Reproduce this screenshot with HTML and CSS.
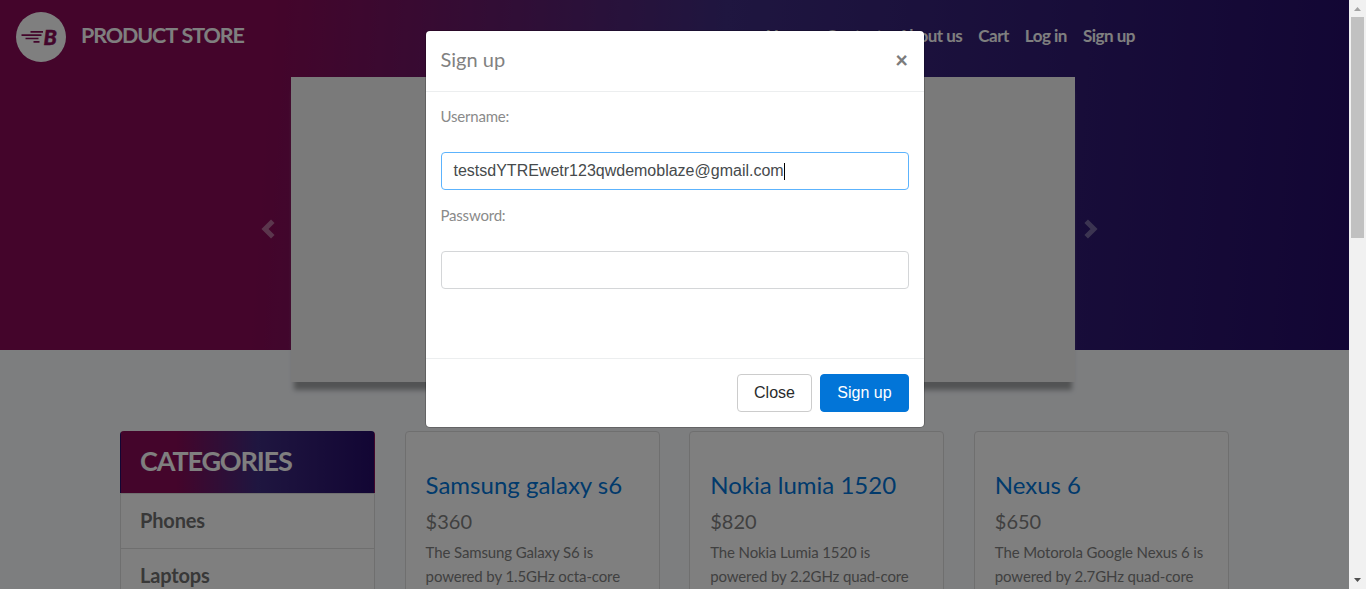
FILE: index.html
```
<!DOCTYPE html>
<html lang="en">
<head>
<meta charset="utf-8">
<title>STORE</title>
<link rel="stylesheet" href="styles.css">
</head>
<body>
<div class="window">
  <div class="page">
    <header class="hero">
      <nav class="navbar">
        <a class="brand">
          <svg class="logo" viewBox="0 0 50 50" width="50" height="50">
            <circle cx="25" cy="25" r="25" fill="#fff"/>
            <path d="M14.500 19.800h12.500M5.500 23.200h20M9.500 26.500h13M17.500 29.800h6" stroke="#870a56" stroke-width="1.700" fill="none"/>
            <text class="logo-letter" x="27.500" y="32.500">B</text>
          </svg>
          <span class="brand-name">PRODUCT STORE</span>
        </a>
        <ul class="nav-links">
          <li>Home</li><li>Contact</li><li>About us</li><li>Cart</li><li>Log in</li><li>Sign up</li>
        </ul>
      </nav>
      <div class="carousel">
        <svg class="arrow" viewBox="0 0 14 20" width="14" height="20"><path d="M11.800 2.200L4 10l7.800 7.800" /></svg>
        <div class="slide"></div>
        <svg class="arrow next" viewBox="0 0 14 20" width="14" height="20"><path d="M2.200 2.200L10 10l-7.800 7.800" /></svg>
      </div>
    </header>
    <main class="content">
      <aside class="categories">
        <h4 class="cat-title">CATEGORIES</h4>
        <a class="cat">Phones</a>
        <a class="cat">Laptops</a>
      </aside>
      <article class="card"><h4 class="name">Samsung galaxy s6</h4><h5 class="price">$360</h5><p class="desc">The Samsung Galaxy S6 is<br>powered by 1.5GHz octa-core</p></article>
      <article class="card"><h4 class="name">Nokia lumia 1520</h4><h5 class="price">$820</h5><p class="desc">The Nokia Lumia 1520 is<br>powered by 2.2GHz quad-core</p></article>
      <article class="card"><h4 class="name">Nexus 6</h4><h5 class="price">$650</h5><p class="desc">The Motorola Google Nexus 6 is<br>powered by 2.7GHz quad-core</p></article>
    </main>
    <div class="backdrop">
      <section class="modal">
        <div class="modal-head"><h5 class="modal-title">Sign up</h5><span class="close">×</span></div>
        <div class="modal-body">
          <div class="label">Username:</div>
          <div class="field focused">testsdYTREwetr123qwdemoblaze@gmail.com<span class="caret"></span></div>
          <div class="label">Password:</div>
          <div class="field"></div>
        </div>
        <div class="modal-foot"><button class="btn">Close</button><button class="btn primary">Sign up</button></div>
      </section>
    </div>
  </div>
  <div class="scrollbar">
    <svg class="tick" viewBox="0 0 7 4" width="7" height="4"><path d="M0 4L3.500 0L7 4z" fill="#a3a3a3"/></svg>
    <div class="thumb"></div>
    <svg class="tick" viewBox="0 0 7 4" width="7" height="4"><path d="M0 0L3.500 4L7 0z" fill="#505050"/></svg>
  </div>
</div>
</body>
</html>
```
FILE: styles.css
```
* { box-sizing: border-box; margin: 0; padding: 0; }
body { font-family: Lato, "Liberation Sans", sans-serif; letter-spacing: -0.12px; color: #818181; }
.window { display: flex; width: 1366px; height: 589px; overflow: hidden; }
.page { position: relative; width: 1349px; height: 589px; overflow: hidden; background: #fafcff; }
.hero { height: 350px; background: linear-gradient(94deg, #880a56 0%, #880a56 20%, #3e2c80 53%, #250c68 100%); }
.navbar { display: flex; justify-content: space-between; height: 77px; padding: 12px 206px 0 16px; }
.brand { display: flex; gap: 15px; }
.logo-letter { font: italic 900 21.5px Lato, sans-serif; letter-spacing: 0; fill: #870a56; stroke: #870a56; stroke-width: .5px; }
.brand-name { padding-top: 9px; font-size: 21.500px; line-height: 28px; font-weight: 700; letter-spacing: -1.1px; word-spacing: 1px; color: #fff; }
.nav-links { display: flex; list-style: none; padding-top: 11px; font-size: 17px; line-height: 25px; font-weight: 700; letter-spacing: -0.5px; color: #fff; }
.nav-links li { padding: 0 8px; }
.carousel { display: flex; align-items: center; padding-left: 261px; height: 305px; }
.slide { width: 784px; height: 305px; margin: 0 9px 0 16px; background: #f4f4f4; box-shadow: 0 11px 5px -3px #a4a6a8; }
.arrow { margin-bottom: 2px; fill: none; stroke: #fff; stroke-opacity: .4; stroke-width: 5; }
.next { stroke-opacity: .35; }
.content { display: grid; grid-template-columns: repeat(4, 255px); gap: 29.600px; margin: 81px 0 0 120px; }
.categories { border: 1px solid #dfdfdf; border-radius: 4px; background: #fff; height: 200px; }
.cat-title { margin: -1px -1px 0; height: 62px; padding: 0 19px; border: 0 solid transparent; border-width: 0 1px; border-radius: 4px 4px 0 0; font-size: 27px; line-height: 60px; font-weight: 700; letter-spacing: -1.15px; color: #fff; background: linear-gradient(to right, #880a56 22%, #3e2c80 54%, #250c68 100%); }
.cat { display: block; height: 55px; padding: 0 19px; border-top: 1px solid #dfdfdf; font-size: 20px; line-height: 52px; font-weight: 700; letter-spacing: -.15px; color: #707070; }
.card { height: 300px; padding: 37px 20px 0; border: 1px solid #dfdfdf; border-radius: 4px; background: #fff; }
.name { font-size: 24px; line-height: 32px; font-weight: 400; letter-spacing: 0; color: #0275d8; }
.price { margin-top: 7px; font-size: 20px; line-height: 27px; font-weight: 400; letter-spacing: 0; }
.desc { margin-top: 5px; font-size: 15px; line-height: 24px; white-space: nowrap; }
.backdrop { position: absolute; inset: 0; background: rgba(0,0,0,.5); }
.modal { width: 498px; height: 396px; margin: 31px 0 0 426px; background: #fff; border-radius: 4px; box-shadow: 0 0 0 1px rgba(0,0,0,.2); }
.modal-head { display: flex; justify-content: space-between; height: 61px; padding: 13px 16px 0 14.500px; border-bottom: 1px solid #eceeef; }
.modal-title { font-size: 20px; line-height: 30px; font-weight: 400; letter-spacing: 0; }
.close { font-size: 22px; line-height: 32px; font-weight: 900; color: #7c7c7c; }
.modal-body { height: 266px; padding: 12px 15px; }
.label { height: 48px; margin-left: -.5px; font-size: 15px; line-height: 24px; letter-spacing: -.2px; color: #8a8a8a; }
.field { display: flex; align-items: center; height: 38px; margin-bottom: 13px; padding-left: 11.500px; border: 1px solid #d4d6d8; border-radius: 4px; font: 16px "Liberation Sans", sans-serif; letter-spacing: 0; color: #464a4c; }
.focused { border-color: #5cb3fd; }
.caret { width: 1px; height: 17px; background: #000; }
.modal-foot { display: flex; justify-content: flex-end; gap: 8px; height: 69px; padding: 15px; border-top: 1px solid #eceeef; }
.btn { width: 75px; height: 38px; border: 1px solid #ccc; border-radius: 4px; background: #fff; font: 16px "Liberation Sans", sans-serif; color: #292b2c; }
.primary { width: 89px; border-color: #0275d8; background: #0275d8; color: #fff; }
.scrollbar { display: flex; flex-direction: column; align-items: center; width: 17px; height: 589px; padding: 7px 0; background: #f1f1f1; }
.thumb { width: 13px; height: 221px; margin: 6px 0 auto; background: #c1c1c1; }
```
